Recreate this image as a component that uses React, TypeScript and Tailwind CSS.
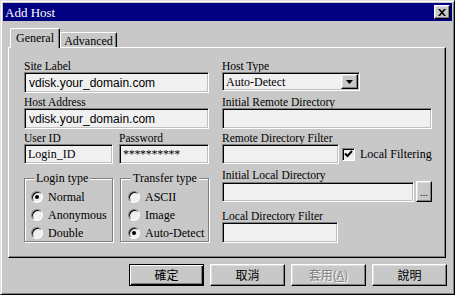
import type { ReactNode } from 'react';

const serif = "font-['Liberation_Serif','Noto_Sans_CJK_TC',serif]";
const sunken =
  'border border-t-[#808080] border-l-[#808080] border-b-white border-r-white shadow-[inset_1px_1px_0_#000,inset_-1px_-1px_0_#c0c0c0] bg-[#f0f0f0]';
const raised =
  'border border-t-white border-l-white border-b-black border-r-black shadow-[inset_-1px_-1px_0_#808080,inset_1px_1px_0_#dfdfdf] bg-[#c8c8c8]';

function Label({ children, className = '' }: { children: ReactNode; className?: string }) {
  return <div className={`h-[12px] leading-[12px] text-[11.5px] text-black whitespace-nowrap ${className}`}>{children}</div>;
}

function Field({ w, h, children, className = '' }: { w: string; h: string; children?: ReactNode; className?: string }) {
  return (
    <div className={`${sunken} ${w} ${h} flex items-center pl-[3px] overflow-hidden whitespace-nowrap ${className}`}>
      {children}
    </div>
  );
}

function Radio({ label, checked = false }: { label: string; checked?: boolean }) {
  return (
    <div className="h-[18px] flex items-center">
      <div className="w-[12px] h-[12px] rounded-full border border-t-[#808080] border-l-[#808080] border-b-white border-r-white bg-[#f0f0f0] shadow-[inset_1px_1px_0_#000] flex items-center justify-center">
        {checked && <div className="w-[4px] h-[4px] rounded-full bg-black" />}
      </div>
      <span className="ml-[5px] text-[12px] leading-[12px]">{label}</span>
    </div>
  );
}

function Group({ title, left, pl, children }: { title: string; left: string; pl: string; children: ReactNode }) {
  return (
    <div className={`relative w-[89px] h-[64px] border border-[#808080] shadow-[inset_1px_1px_0_#fff,1px_1px_0_#fff] pt-[9px] ${pl}`}>
      <span className={`absolute -top-[7px] ${left} px-[2px] bg-[#c8c8c8] text-[12px] leading-[12px]`}>{title}</span>
      {children}
    </div>
  );
}

function Button({ children, def = false, disabled = false }: { children: ReactNode; def?: boolean; disabled?: boolean }) {
  const frame = def
    ? 'border border-black shadow-[inset_1px_1px_0_#fff,inset_-1px_-1px_0_#000,inset_-2px_-2px_0_#808080]'
    : raised;
  return (
    <div
      className={`${frame} w-[75px] h-[22px] flex items-center justify-center bg-[#c8c8c8] text-[12px] font-['Noto_Sans_CJK_TC',sans-serif] ${
        disabled ? 'text-[#808080] [text-shadow:1px_1px_0_#fff]' : 'text-black'
      }`}
    >
      {children}
    </div>
  );
}

export default function App() {
  return (
    <div className={`w-[455px] h-[295px] bg-[#c8c8c8] border border-t-[#dfdfdf] border-l-[#dfdfdf] border-r-black border-b-black shadow-[inset_1px_1px_0_#fff,inset_-1px_-1px_0_#808080] p-[2px] ${serif}`}>
      {/* title bar */}
      <div className="h-[18px] bg-[#000080] flex items-center justify-between pl-[2px] pr-[2px]">
        <span className="text-white text-[13px] leading-[13px]">Add Host</span>
        <div className={`${raised} w-[16px] h-[14px] flex items-center justify-center`}>
          <svg width="8" height="7" viewBox="0 0 8 7">
            <path d="M0 0h2l2 2.2L6 0h2L5 3.5 8 7H6L4 4.8 2 7H0l3-3.5z" fill="#000" />
          </svg>
        </div>
      </div>

      <div className="px-[5px]">
        {/* tabs */}
        <div className="h-[26px] flex items-end pl-[2px]">
          <div className="relative z-10 -mb-[1px] w-[50px] h-[20px] bg-[#c8c8c8] border border-b-0 border-t-white border-l-white border-r-black rounded-t-[2px] shadow-[inset_-1px_0_0_#808080] flex items-start justify-center pt-[3px] text-[12px] leading-[12px]">
            General
          </div>
          <div className="w-[57px] h-[15px] border border-b-0 border-t-white border-l-white border-r-black rounded-t-[2px] shadow-[inset_-1px_0_0_#808080] flex items-start justify-center pt-[2px] text-[12px] leading-[12px]">
            Advanced
          </div>
        </div>

        {/* panel */}
        <div className="w-[438px] h-[211px] border border-t-white border-l-white border-r-black border-b-black shadow-[inset_-1px_-1px_0_#808080] pl-[15px] pt-[12px] flex">
          {/* left column */}
          <div className="w-[185px] flex flex-col">
            <Label>Site Label</Label>
            <Field w="w-[185px]" h="h-[21px]">
              <span className="font-['Liberation_Sans',sans-serif] text-[12px] pl-[1px]">vdisk.your_domain.com</span>
            </Field>
            <Label className="mt-[3px]">Host Address</Label>
            <Field w="w-[185px]" h="h-[21px]">
              <span className="font-['Liberation_Sans',sans-serif] text-[12px] pl-[1px]">vdisk.your_domain.com</span>
            </Field>
            <div className="mt-[3px] flex gap-[6px]">
              <div>
                <Label>User ID</Label>
                <Field w="w-[89px]" h="h-[20px]">
                  <span className="text-[12px]">Login_ID</span>
                </Field>
              </div>
              <div>
                <Label>Password</Label>
                <Field w="w-[90px]" h="h-[20px]">
                  <span className="text-[12px] tracking-[-0.3px]">**********</span>
                </Field>
              </div>
            </div>
            <div className="mt-[14px] flex gap-[7px]">
              <Group title="Login type" left="left-[9px]" pl="pl-[6px]">
                <Radio label="Normal" checked />
                <Radio label="Anonymous" />
                <Radio label="Double" />
              </Group>
              <Group title="Transfer type" left="left-[10px]" pl="pl-[7px]">
                <Radio label="ASCII" />
                <Radio label="Image" />
                <Radio label="Auto-Detect" checked />
              </Group>
            </div>
          </div>

          {/* right column */}
          <div className="ml-[13px] w-[210px] flex flex-col">
            <Label>Host Type</Label>
            <div className={`${sunken} w-[138px] h-[19px] flex items-center justify-between pl-[3px] pr-[1px]`}>
              <span className="text-[12px]">Auto-Detect</span>
              <div className={`${raised} w-[17px] h-[15px] flex items-center justify-center`}>
                <svg width="7" height="4" viewBox="0 0 7 4">
                  <path d="M0 0h7L3.5 4z" fill="#000" />
                </svg>
              </div>
            </div>
            <Label className="mt-[5px]">Initial Remote Directory</Label>
            <Field w="w-[210px]" h="h-[21px]" />
            <Label className="mt-[3px]">Remote Directory Filter</Label>
            <div className="flex items-center">
              <Field w="w-[117px]" h="h-[20px]" />
              <div className="ml-[3px] w-[13px] h-[13px] border border-t-[#808080] border-l-[#808080] border-b-white border-r-white bg-[#f0f0f0] shadow-[inset_1px_1px_0_#000] flex items-center justify-center">
                <svg width="9" height="8" viewBox="0 0 9 8">
                  <path d="M1 3.5l2.5 2.5L8 1" stroke="#000" strokeWidth="2" fill="none" />
                </svg>
              </div>
              <span className="ml-[5px] text-[12px] leading-[12px] whitespace-nowrap">Local Filtering</span>
            </div>
            <Label className="mt-[5px]">Initial Local Directory</Label>
            <div className="flex items-center gap-[2px]">
              <Field w="w-[192px]" h="h-[20px]" />
              <div className={`${raised} w-[16px] h-[21px] flex items-end justify-center pb-[3px] text-[10px] leading-[10px]`}>...</div>
            </div>
            <Label className="mt-[8px]">Local Directory Filter</Label>
            <Field w="w-[116px]" h="h-[21px]" />
          </div>
        </div>

        {/* buttons */}
        <div className="mt-[6px] flex justify-end gap-[6px]">
          <Button def>確定</Button>
          <Button>取消</Button>
          <Button disabled>
            套用(<span className="underline">A</span>)
          </Button>
          <Button>說明</Button>
        </div>
      </div>
    </div>
  );
}
